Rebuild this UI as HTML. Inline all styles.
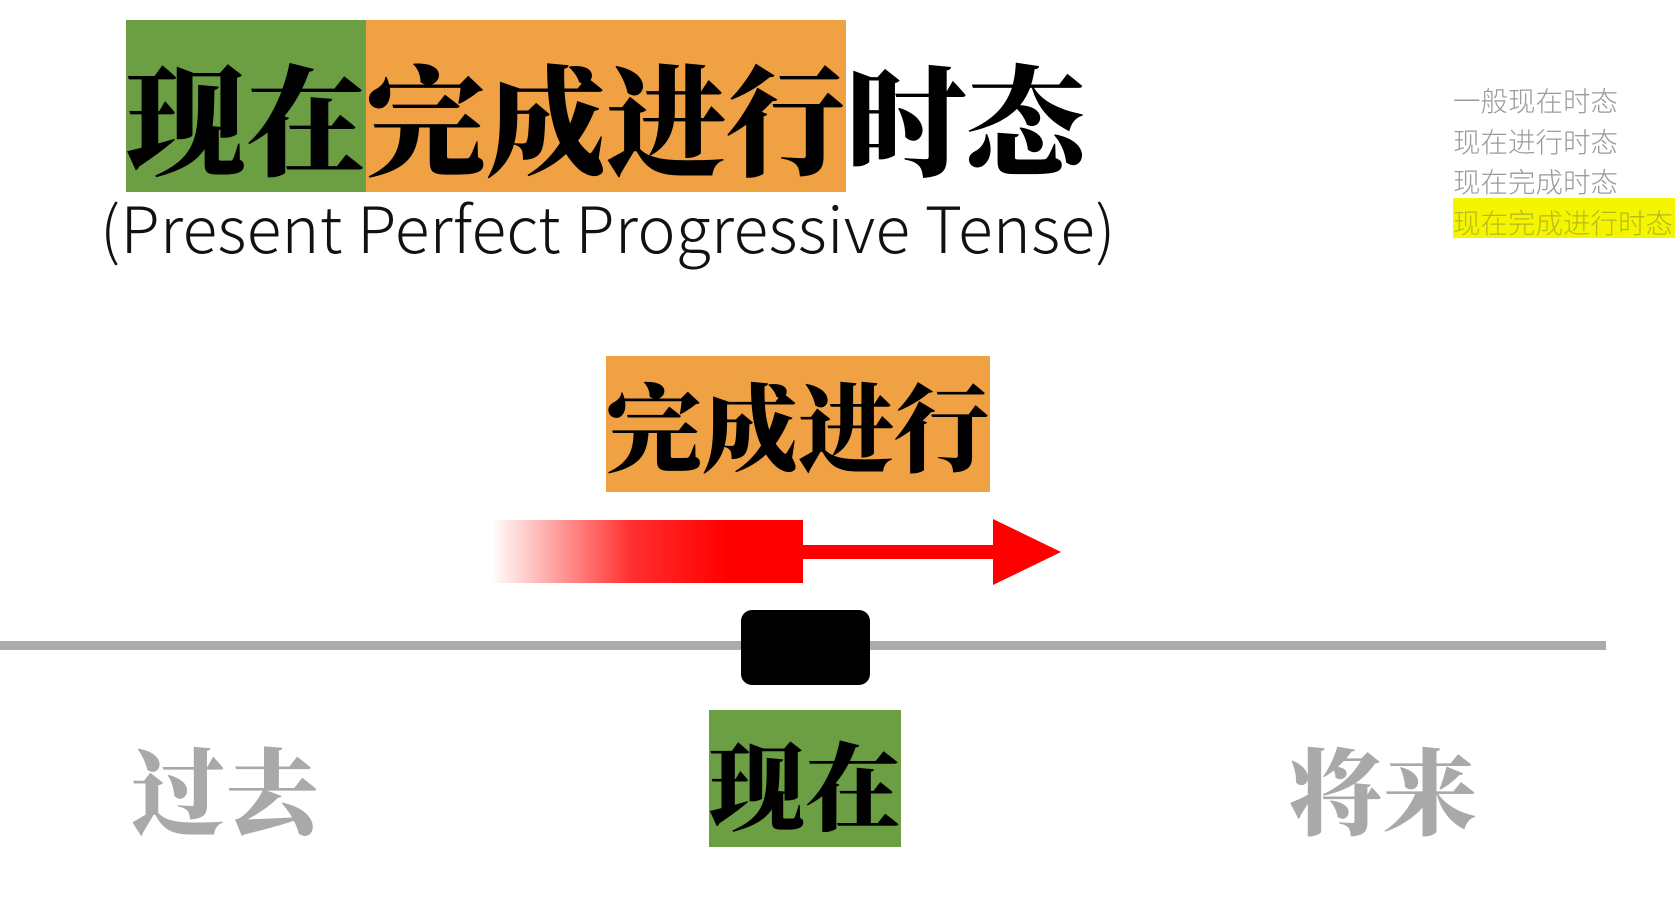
<!DOCTYPE html>
<html><head><meta charset="utf-8"><style>
body{margin:0;width:1675px;height:918px;background:#fff;position:relative;overflow:hidden}
.a{position:absolute}
.cj{font-family:"Noto Serif CJK SC","Liberation Serif",serif;font-weight:900;line-height:1;white-space:nowrap}
</style></head><body>
<div class="a" style="left:126px;top:20px;width:240px;height:172px;background:#6c9f43"></div>
<div class="a" style="left:366px;top:20px;width:480px;height:172px;background:#f0a143"></div>
<div class="a cj" style="left:126px;top:55px;font-size:120px;color:#000;letter-spacing:0px">现在完成进行时态</div>
<div class="a" style="left:100px;top:186px;font-family:'Noto Sans CJK SC','Liberation Sans',sans-serif;font-weight:300;font-size:64px;line-height:80px;letter-spacing:0.35px;color:#111;white-space:nowrap">(Present Perfect Progressive Tense)</div>

<div class="a" style="left:1453px;top:198px;width:222px;height:40px;background:#f6f500"></div>
<div class="a" style="left:1453px;top:79px;font-family:'Noto Sans CJK SC',sans-serif;font-weight:300;font-size:27.5px;line-height:40.5px;color:#9a9a9a;white-space:nowrap">一般现在时态<br>现在进行时态<br>现在完成时态<br><span style="color:#b8b820">现在完成进行时态</span></div>

<div class="a" style="left:606px;top:356px;width:384px;height:136px;background:#f0a143"></div>
<div class="a cj" style="left:606px;top:376px;font-size:96px;color:#000">完成进行</div>

<div class="a" style="left:491px;top:520px;width:312px;height:63px;background:linear-gradient(to right,rgba(255,0,0,0),#ff3030 45%,#f00 75%)"></div>
<div class="a" style="left:803px;top:545px;width:192px;height:14px;background:#f00"></div>
<svg class="a" style="left:993px;top:519px" width="70" height="67"><polygon points="0,0 68,33 0,66" fill="#f00"/></svg>

<div class="a" style="left:0;top:641px;width:1606px;height:9px;background:#ababab"></div>
<div class="a" style="left:741px;top:610px;width:129px;height:75px;background:#000;border-radius:11px"></div>

<div class="a" style="left:709px;top:710px;width:192px;height:137px;background:#6c9f43"></div>
<div class="a cj" style="left:709px;top:735px;font-size:96px;color:#000">现在</div>
<div class="a cj" style="left:131px;top:740px;font-size:94px;color:#a9a9a9">过去</div>
<div class="a cj" style="left:1289px;top:740px;font-size:94px;color:#a9a9a9">将来</div>
</body></html>
